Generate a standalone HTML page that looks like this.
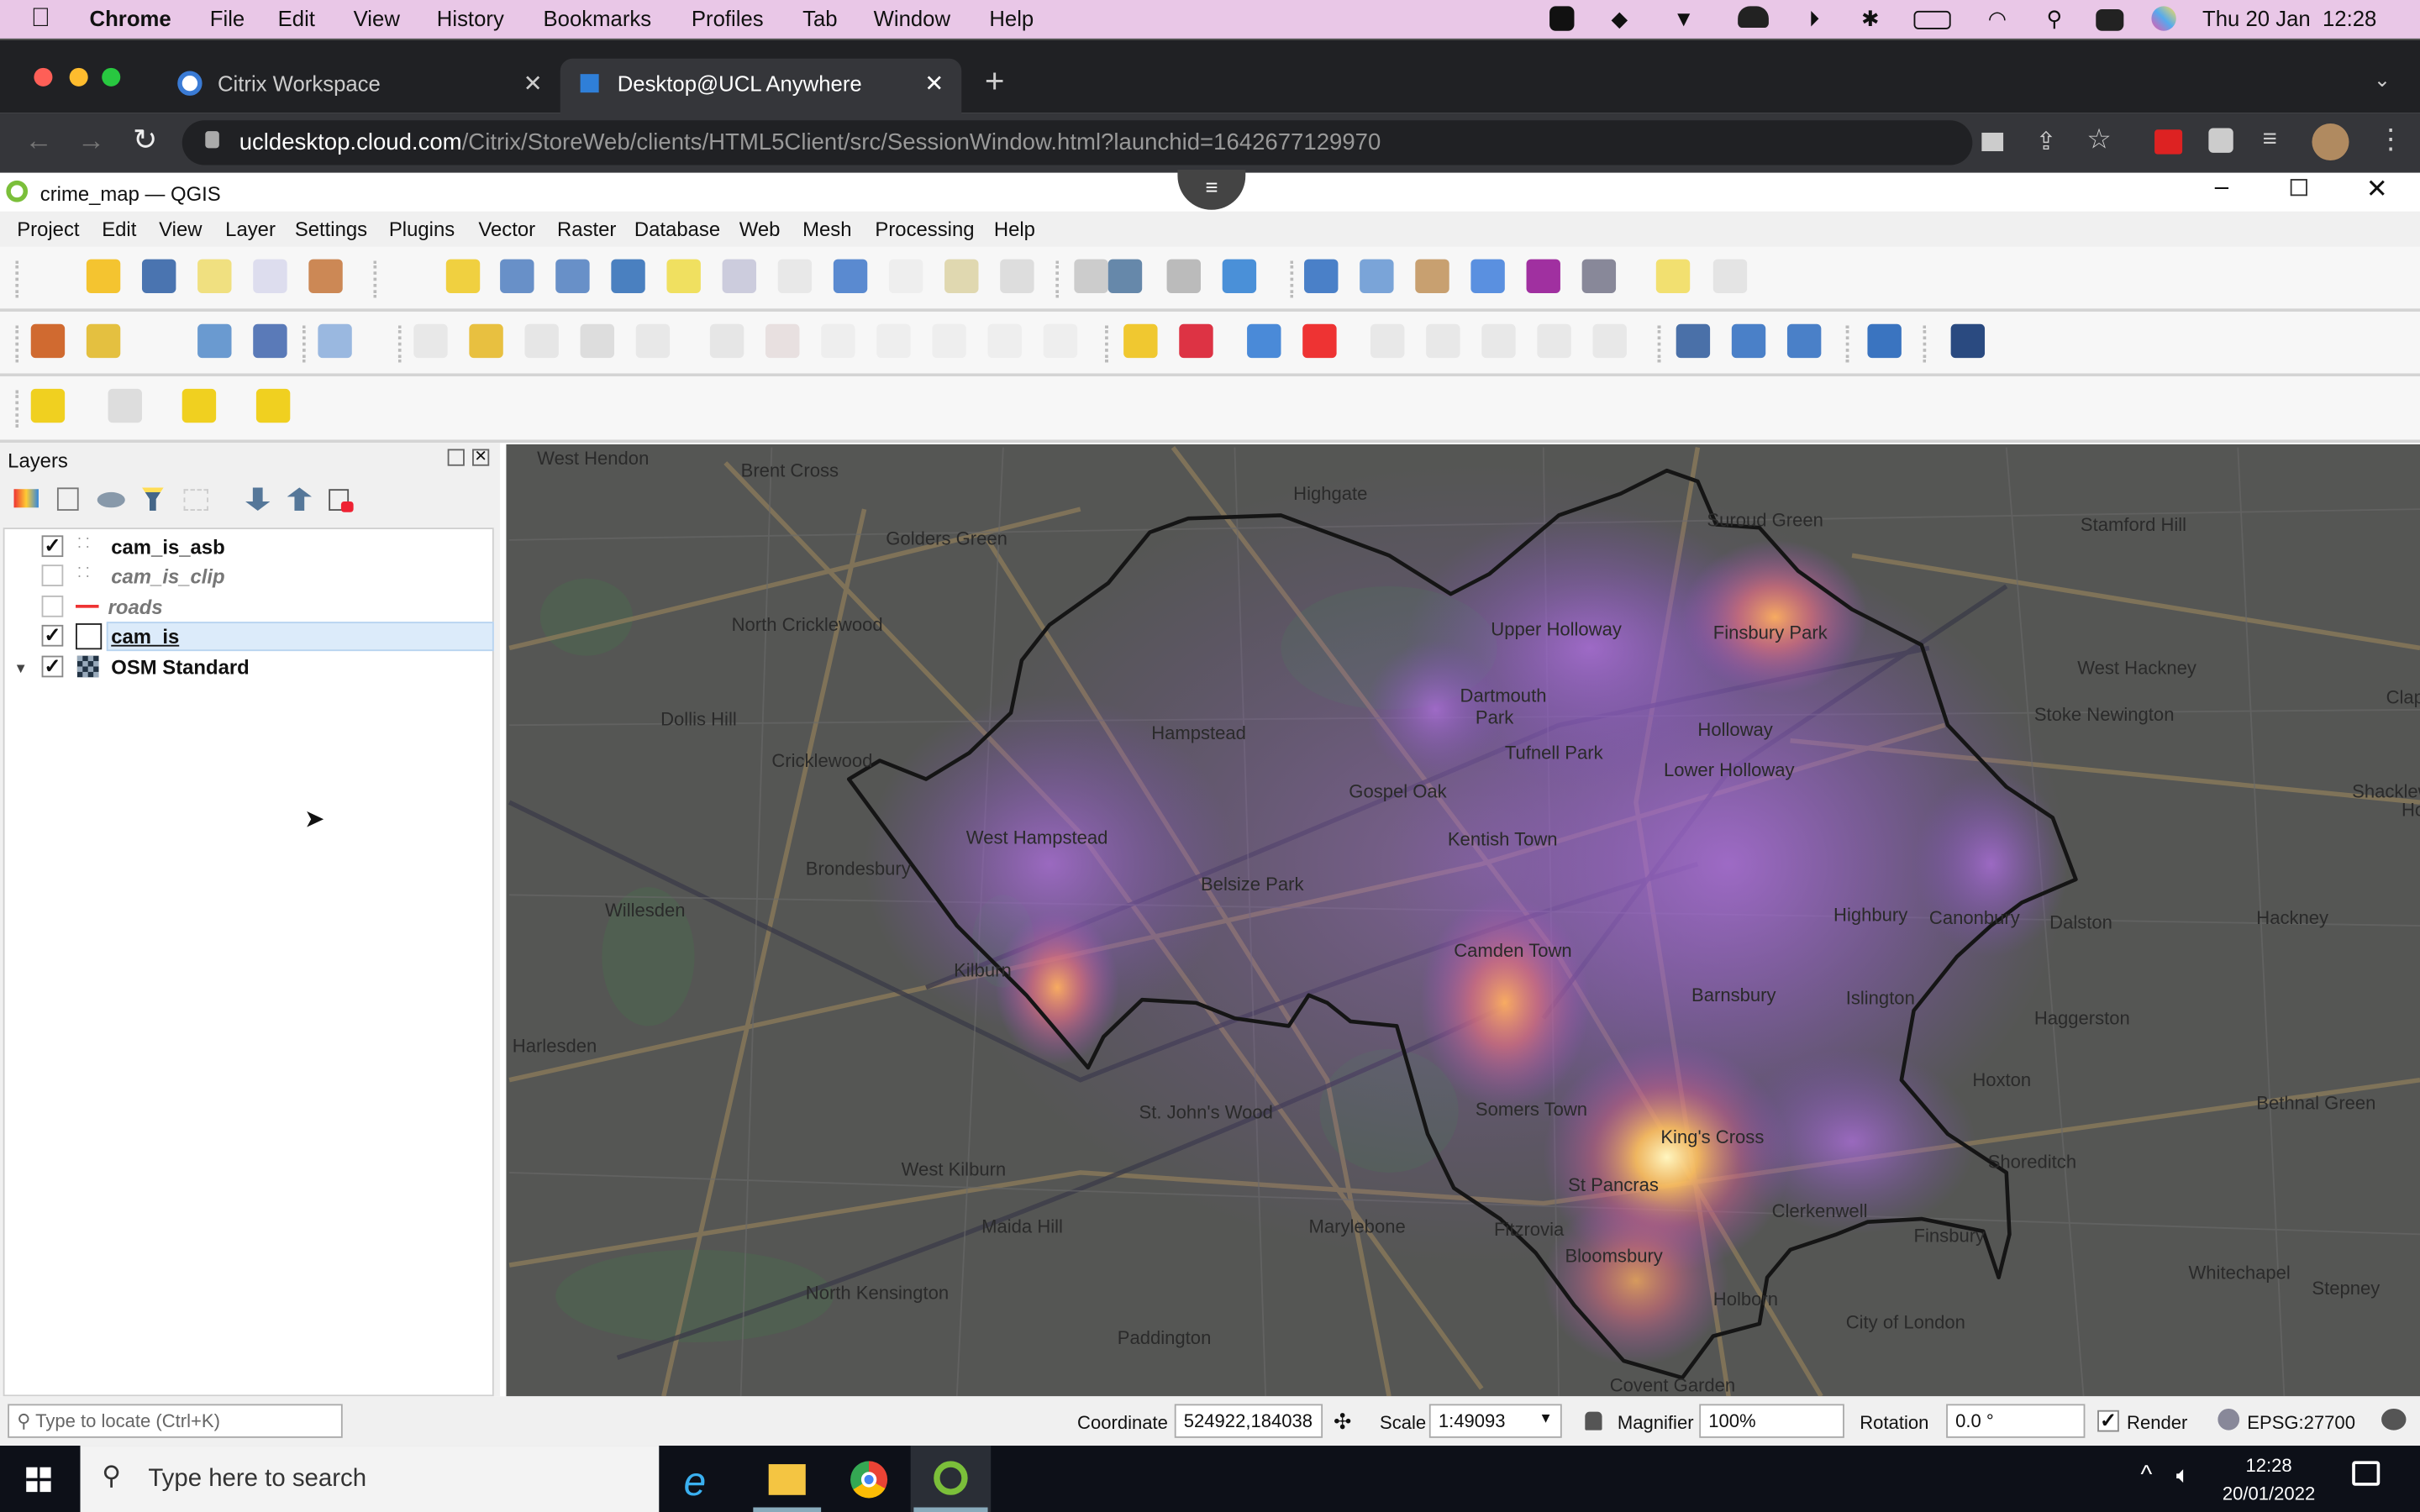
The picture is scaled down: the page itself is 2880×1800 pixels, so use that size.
<!DOCTYPE html>
<html><head><meta charset="utf-8">
<style>
*{margin:0;padding:0;box-sizing:border-box}
html,body{width:2880px;height:1800px;overflow:hidden;background:#fff}
#w{position:absolute;left:0;top:0;width:1568px;height:980px;transform:scale(1.836735);transform-origin:0 0;font-family:"Liberation Sans",sans-serif;font-size:13px;color:#111}
.a{position:absolute}
.mac{left:0;top:0;width:1568px;height:25px;background:#e9c7e7;font-size:14px}
.mac span{position:absolute;top:4px}
.tabs{left:0;top:25px;width:1568px;height:48px;background:#202124;border-top:1px solid #555}
.addr{left:0;top:73px;width:1568px;height:39px;background:#35363a}
.qt{left:0;top:112px;width:1568px;height:25px;background:#fff;font-size:13px}
.menu{left:0;top:137px;width:1568px;height:23px;background:#f0f0f0;font-size:13px}
.menu span{position:absolute;top:4px}
.tb{left:0;width:1568px;background:#f7f7f7;border-bottom:2px solid #d4d4d4}
.ic{position:absolute;width:22px;height:22px;border-radius:3px}
.grip{position:absolute;width:3px;height:24px;border-left:2px dotted #bbb}
.panel{left:0;top:287px;width:324px;height:618px;background:#f0f0f0}
.list{left:2px;top:342px;width:318px;height:563px;background:#fff;border:1px solid #cfcfcf}
.cb{position:absolute;width:14px;height:14px;border:1px solid #888;background:#fff;font-size:13px;line-height:12px;text-align:center;font-weight:bold}
.lt{position:absolute;font-size:13px}
.map{left:328px;top:288px;width:1240px;height:617px;background:#555654;overflow:hidden}
.lbl{position:absolute;font-size:12px;color:#2a2a2a;white-space:nowrap}
.status{left:0;top:905px;width:1568px;height:32px;background:#f0f0f0;font-size:12px}
.box{position:absolute;background:#fff;border:1px solid #aaa;height:22px;top:5px;font-size:12px;padding:3px 5px}
.task{left:0;top:937px;width:1568px;height:43px;background:#0d1018}
</style></head><body><div id="w">

<div class="a mac">
<span style="left:20px;top:2px;font-size:17px">&#63743;</span>
<span style="left:58px;font-weight:bold">Chrome</span><span style="left:136px">File</span><span style="left:180px">Edit</span><span style="left:229px">View</span><span style="left:283px">History</span><span style="left:352px">Bookmarks</span><span style="left:448px">Profiles</span><span style="left:520px">Tab</span><span style="left:566px">Window</span><span style="left:641px">Help</span>
<span style="left:1004px;width:16px;height:16px;background:#111;border-radius:4px"></span>
<span style="left:1044px">◆</span><span style="left:1084px">▼</span><span style="left:1126px;width:20px;height:14px;background:#222;border-radius:8px 8px 3px 3px"></span>
<span style="left:1172px">⏵</span><span style="left:1206px">✱</span>
<span style="left:1240px;width:24px;height:12px;border:1.5px solid #111;border-radius:3px;top:7px"></span>
<span style="left:1288px">◠</span><span style="left:1326px">⚲</span><span style="left:1358px;width:18px;height:14px;background:#222;border-radius:4px;top:6px"></span>
<span style="left:1394px;width:16px;height:16px;border-radius:50%;background:linear-gradient(45deg,#e5a,#5ae,#fd5)"></span>
<span style="left:1427px">Thu 20 Jan&nbsp; 12:28</span>
</div>

<div class="a tabs">
<div class="a" style="left:22px;top:18px;width:12px;height:12px;border-radius:50%;background:#fe5f57"></div>
<div class="a" style="left:45px;top:18px;width:12px;height:12px;border-radius:50%;background:#febc2e"></div>
<div class="a" style="left:66px;top:18px;width:12px;height:12px;border-radius:50%;background:#28c840"></div>
<div class="a" style="left:115px;top:20px;width:16px;height:16px;border-radius:50%;background:#fff;border:3px solid #3a7bd5"></div>
<div class="a" style="left:141px;top:20px;color:#ccc;font-size:14px">Citrix Workspace</div>
<div class="a" style="left:339px;top:19px;color:#ccc;font-size:15px">✕</div>
<div class="a" style="left:363px;top:12px;width:260px;height:36px;background:#35363a;border-radius:8px 8px 0 0"></div>
<div class="a" style="left:376px;top:22px;width:12px;height:12px;background:#2f7fd8"></div>
<div class="a" style="left:400px;top:20px;color:#fff;font-size:14px">Desktop@UCL Anywhere</div>
<div class="a" style="left:599px;top:19px;color:#fff;font-size:15px">✕</div>
<div class="a" style="left:638px;top:14px;color:#ccc;font-size:22px">+</div>
<div class="a" style="left:1538px;top:18px;color:#ccc;font-size:13px">⌄</div>
</div>

<div class="a addr">
<div class="a" style="left:16px;top:8px;color:#777;font-size:18px">←</div>
<div class="a" style="left:50px;top:8px;color:#777;font-size:18px">→</div>
<div class="a" style="left:86px;top:7px;color:#eee;font-size:19px">↻</div>
<div class="a" style="left:118px;top:5px;width:1160px;height:29px;background:#202124;border-radius:15px"></div>
<div class="a" style="left:133px;top:12px;width:9px;height:11px;background:#aaa;border-radius:2px"></div>
<div class="a" style="left:155px;top:11px;font-size:15px;color:#fff">ucldesktop.cloud.com<span style="color:#999">/Citrix/StoreWeb/clients/HTML5Client/src/SessionWindow.html?launchid=1642677129970</span></div>
<div class="a" style="left:1284px;top:13px;width:14px;height:12px;background:#ccc"></div>
<div class="a" style="left:1319px;top:9px;color:#ccc;font-size:16px">⇪</div>
<div class="a" style="left:1352px;top:7px;color:#ccc;font-size:18px">☆</div>
<div class="a" style="left:1396px;top:11px;width:18px;height:16px;background:#d22;border-radius:2px"></div>
<div class="a" style="left:1431px;top:10px;width:16px;height:16px;background:#ccc;border-radius:3px"></div>
<div class="a" style="left:1466px;top:9px;color:#ccc;font-size:16px">≡</div>
<div class="a" style="left:1498px;top:7px;width:24px;height:24px;border-radius:50%;background:#b08a60"></div>
<div class="a" style="left:1540px;top:7px;color:#ccc;font-size:18px">⋮</div>
</div>

<div class="a qt">
<div class="a" style="left:4px;top:5px;width:14px;height:14px;border-radius:50%;border:3px solid #7bbf3a"></div>
<div class="a" style="left:26px;top:6px">crime_map — QGIS</div>
<div class="a" style="left:763px;top:-2px;width:44px;height:26px;background:#444;border-radius:0 0 22px 22px;color:#fff;text-align:center;font-size:14px;line-height:22px">≡</div>
<div class="a" style="left:1435px;top:1px;font-size:16px">–</div>
<div class="a" style="left:1484px;top:4px;width:11px;height:11px;border:1px solid #333"></div>
<div class="a" style="left:1533px;top:1px;font-size:17px">✕</div>
</div>

<div class="a menu">
<span style="left:11px">Project</span><span style="left:66px">Edit</span><span style="left:103px">View</span><span style="left:146px">Layer</span><span style="left:191px">Settings</span><span style="left:252px">Plugins</span><span style="left:310px">Vector</span><span style="left:361px">Raster</span><span style="left:411px">Database</span><span style="left:479px">Web</span><span style="left:520px">Mesh</span><span style="left:567px">Processing</span><span style="left:644px">Help</span>
</div>

<div class="a tb" style="top:160px;height:42px" id="r1"></div>
<div class="a tb" style="top:202px;height:42px" id="r2"></div>
<div class="a tb" style="top:244px;height:43px" id="r3"></div>

<div class="a panel">
<div class="a" style="left:5px;top:4px">Layers</div>
<div class="a" style="left:290px;top:4px;width:11px;height:11px;border:1px solid #666"></div>
<div class="a" style="left:306px;top:4px;width:11px;height:11px;border:1px solid #666;font-size:10px;line-height:9px;text-align:center">✕</div>
<div class="a" style="left:9px;top:30px;width:16px;height:12px;background:linear-gradient(90deg,#e33,#fc3,#38d)"></div>
<div class="a" style="left:37px;top:29px;width:14px;height:15px;border:1px solid #777"></div>
<div class="a" style="left:63px;top:32px;width:18px;height:10px;border-radius:50%;background:#89a;"></div>
<div class="a" style="left:92px;top:29px;width:14px;height:15px;background:linear-gradient(#fd5 20%,#468 20%);clip-path:polygon(0 0,100% 0,65% 50%,65% 100%,35% 100%,35% 50%)"></div>
<div class="a" style="left:119px;top:30px;width:16px;height:14px;border:1px dashed #ccc"></div>
<div class="a" style="left:159px;top:29px;width:16px;height:15px;background:#579;clip-path:polygon(30% 0,70% 0,70% 60%,100% 60%,50% 100%,0 60%,30% 60%)"></div>
<div class="a" style="left:186px;top:29px;width:16px;height:15px;background:#579;clip-path:polygon(50% 0,100% 40%,70% 40%,70% 100%,30% 100%,30% 40%,0 40%)"></div>
<div class="a" style="left:213px;top:30px;width:13px;height:14px;border:1px solid #555"></div>
<div class="a" style="left:221px;top:38px;width:8px;height:7px;background:#e23;border-radius:2px"></div>
</div>
<div class="a list">
<div class="cb" style="left:24px;top:4px">✓</div><div class="a" style="left:47px;top:4px;color:#999;font-size:9px">⁚ ⁚</div><div class="lt" style="left:69px;top:4px;font-weight:bold">cam_is_asb</div>
<div class="cb" style="left:24px;top:23px;border-color:#bbb"></div><div class="a" style="left:47px;top:23px;color:#999;font-size:9px">⁚ ⁚</div><div class="lt" style="left:69px;top:23px;font-style:italic;font-weight:bold;color:#777">cam_is_clip</div>
<div class="cb" style="left:24px;top:43px;border-color:#bbb"></div><div class="a" style="left:46px;top:49px;width:15px;height:2px;background:#e33"></div><div class="lt" style="left:67px;top:43px;font-style:italic;font-weight:bold;color:#777">roads</div>
<div class="a" style="left:66px;top:60px;width:251px;height:19px;background:#dcebfa;border:1px solid #b8d4f0"></div>
<div class="cb" style="left:24px;top:62px">✓</div><div class="a" style="left:46px;top:61px;width:17px;height:17px;border:1.5px solid #222"></div><div class="lt" style="left:69px;top:62px;font-weight:bold;text-decoration:underline">cam_is</div>
<div class="a" style="left:6px;top:85px;font-size:9px;color:#444">▼</div>
<div class="cb" style="left:24px;top:82px">✓</div><div class="a" style="left:47px;top:82px;width:14px;height:14px;background:repeating-conic-gradient(#234 0 25%,#9ab 0 50%) 0 0/7px 7px"></div><div class="lt" style="left:69px;top:82px;font-weight:bold">OSM Standard</div>
<div class="a" style="left:194px;top:178px;font-size:16px">➤</div>
</div>

<div class="a map">
<svg width="1240" height="617" viewBox="328 288 1240 617" style="position:absolute;left:0;top:0">
<defs>
<radialGradient id="p"><stop offset="0" stop-color="#b070e0" stop-opacity=".75"/><stop offset="1" stop-color="#8050c0" stop-opacity="0"/></radialGradient>
<radialGradient id="o"><stop offset="0" stop-color="#ffb060" stop-opacity=".95"/><stop offset=".4" stop-color="#e07080" stop-opacity=".7"/><stop offset="1" stop-color="#a050d0" stop-opacity="0"/></radialGradient>
<radialGradient id="y"><stop offset="0" stop-color="#fff6c0"/><stop offset=".25" stop-color="#ffc060" stop-opacity=".9"/><stop offset=".6" stop-color="#d06090" stop-opacity=".5"/><stop offset="1" stop-color="#a050d0" stop-opacity="0"/></radialGradient>
</defs>
<g fill="#4e6450" opacity=".7">
<ellipse cx="420" cy="620" rx="30" ry="45"/><ellipse cx="900" cy="420" rx="70" ry="40"/><ellipse cx="900" cy="720" rx="45" ry="40"/><ellipse cx="450" cy="840" rx="90" ry="30"/><ellipse cx="650" cy="610" rx="20" ry="30"/><ellipse cx="380" cy="400" rx="30" ry="25"/>
</g>
<g stroke="#8a7a5a" stroke-width="3" fill="none" opacity=".8">
<path d="M330 420 Q500 380 700 330"/><path d="M470 300 L700 540 L960 900"/><path d="M640 350 L860 700 L900 905"/><path d="M330 700 Q600 640 960 560 L1260 470"/><path d="M760 290 L1010 620 L1180 905"/><path d="M1100 290 L1060 520 L1120 905"/><path d="M330 820 L700 760 L1000 780 L1568 700"/><path d="M1200 360 L1568 420"/><path d="M1160 480 L1568 520"/><path d="M560 330 L430 905"/>
</g>
<g stroke="#3c3c48" stroke-width="3" fill="none" opacity=".8">
<path d="M330 520 L700 700 Q900 620 1100 560"/><path d="M600 640 Q800 560 1010 470 L1250 420"/><path d="M400 880 Q700 780 980 650"/><path d="M1000 660 L1120 500 L1300 380"/>
</g>
<g stroke="#6a6a6a" stroke-width="1" fill="none" opacity=".6">
<path d="M330 350 L1568 330"/><path d="M330 470 L1568 460"/><path d="M330 580 L1568 600"/><path d="M330 760 L1568 800"/><path d="M500 290 L480 905"/><path d="M800 290 L820 905"/><path d="M1300 290 L1350 905"/><path d="M1450 290 L1480 905"/><path d="M650 290 L620 905"/><path d="M1000 290 L1010 905"/>
</g>
<ellipse cx="960" cy="560" rx="360" ry="260" fill="url(#p)" opacity=".6"/>
<ellipse cx="1120" cy="560" rx="220" ry="200" fill="url(#p)"/>
<ellipse cx="680" cy="560" rx="120" ry="110" fill="url(#p)"/>
<ellipse cx="1030" cy="420" rx="120" ry="90" fill="url(#p)"/>
<ellipse cx="1150" cy="400" rx="60" ry="50" fill="url(#o)"/>
<ellipse cx="930" cy="460" rx="45" ry="45" fill="url(#p)"/>
<ellipse cx="685" cy="640" rx="40" ry="50" fill="url(#o)"/>
<ellipse cx="975" cy="650" rx="55" ry="70" fill="url(#o)"/>
<ellipse cx="1080" cy="750" rx="80" ry="75" fill="url(#y)"/>
<ellipse cx="1060" cy="830" rx="60" ry="55" fill="url(#o)" opacity=".8"/>
<ellipse cx="1200" cy="740" rx="80" ry="60" fill="url(#p)"/>
<ellipse cx="1290" cy="560" rx="50" ry="60" fill="url(#p)"/>
<path fill="none" stroke="#151515" stroke-width="2.5" stroke-linejoin="round" d="M550 505 L570 493 L600 505 L628 488 L655 462 L662 428 L680 405 L718 378 L745 345 L770 336 L830 334 L900 360 L940 385 L965 372 L1010 334 L1050 320 L1080 305 L1100 312 L1112 340 L1140 342 L1165 370 L1200 395 L1245 418 L1262 470 L1300 510 L1330 530 L1345 570 L1310 585 L1290 600 L1268 620 L1240 655 L1232 700 L1262 735 L1300 760 L1302 800 L1295 828 L1285 798 L1245 790 L1210 792 L1190 800 L1160 810 L1145 828 L1140 858 L1110 866 L1090 893 L1052 882 L1020 846 L995 812 L972 790 L942 770 L925 735 L905 665 L875 662 L860 650 L848 645 L835 665 L800 660 L775 650 L740 648 L715 672 L705 692 L665 645 L620 600 Z"/>
</svg>
<div class="lbl" style="left:20px;top:2px">West Hendon</div>
<div class="lbl" style="left:152px;top:10px">Brent Cross</div>
<div class="lbl" style="left:510px;top:25px">Highgate</div>
<div class="lbl" style="left:246px;top:54px">Golders Green</div>
<div class="lbl" style="left:778px;top:42px">Suroud Green</div>
<div class="lbl" style="left:1020px;top:45px">Stamford Hill</div>
<div class="lbl" style="left:146px;top:110px">North Cricklewood</div>
<div class="lbl" style="left:638px;top:113px">Upper Holloway</div>
<div class="lbl" style="left:782px;top:115px">Finsbury Park</div>
<div class="lbl" style="left:1018px;top:138px">West Hackney</div>
<div class="lbl" style="left:618px;top:156px">Dartmouth<br>&nbsp;&nbsp;&nbsp;Park</div>
<div class="lbl" style="left:418px;top:180px">Hampstead</div>
<div class="lbl" style="left:772px;top:178px">Holloway</div>
<div class="lbl" style="left:990px;top:168px">Stoke Newington</div>
<div class="lbl" style="left:100px;top:171px">Dollis Hill</div>
<div class="lbl" style="left:1218px;top:157px">Clapton</div>
<div class="lbl" style="left:647px;top:193px">Tufnell Park</div>
<div class="lbl" style="left:750px;top:204px">Lower Holloway</div>
<div class="lbl" style="left:172px;top:198px">Cricklewood</div>
<div class="lbl" style="left:546px;top:218px">Gospel Oak</div>
<div class="lbl" style="left:1196px;top:218px">Shacklewell</div>
<div class="lbl" style="left:298px;top:248px">West Hampstead</div>
<div class="lbl" style="left:610px;top:249px">Kentish Town</div>
<div class="lbl" style="left:1228px;top:230px">Homer</div>
<div class="lbl" style="left:194px;top:268px">Brondesbury</div>
<div class="lbl" style="left:450px;top:278px">Belsize Park</div>
<div class="lbl" style="left:860px;top:298px">Highbury</div>
<div class="lbl" style="left:64px;top:295px">Willesden</div>
<div class="lbl" style="left:922px;top:300px">Canonbury</div>
<div class="lbl" style="left:1000px;top:303px">Dalston</div>
<div class="lbl" style="left:1134px;top:300px">Hackney</div>
<div class="lbl" style="left:290px;top:334px">Kilburn</div>
<div class="lbl" style="left:614px;top:321px">Camden Town</div>
<div class="lbl" style="left:768px;top:350px">Barnsbury</div>
<div class="lbl" style="left:868px;top:352px">Islington</div>
<div class="lbl" style="left:990px;top:365px">Haggerston</div>
<div class="lbl" style="left:4px;top:383px">Harlesden</div>
<div class="lbl" style="left:950px;top:405px">Hoxton</div>
<div class="lbl" style="left:1134px;top:420px">Bethnal Green</div>
<div class="lbl" style="left:410px;top:426px">St. John's Wood</div>
<div class="lbl" style="left:628px;top:424px">Somers Town</div>
<div class="lbl" style="left:748px;top:442px">King's Cross</div>
<div class="lbl" style="left:960px;top:458px">Shoreditch</div>
<div class="lbl" style="left:256px;top:463px">West Kilburn</div>
<div class="lbl" style="left:688px;top:473px">St Pancras</div>
<div class="lbl" style="left:820px;top:490px">Clerkenwell</div>
<div class="lbl" style="left:308px;top:500px">Maida Hill</div>
<div class="lbl" style="left:520px;top:500px">Marylebone</div>
<div class="lbl" style="left:640px;top:502px">Fitzrovia</div>
<div class="lbl" style="left:912px;top:506px">Finsbury</div>
<div class="lbl" style="left:686px;top:519px">Bloomsbury</div>
<div class="lbl" style="left:782px;top:547px">Holborn</div>
<div class="lbl" style="left:1090px;top:530px">Whitechapel</div>
<div class="lbl" style="left:194px;top:543px">North Kensington</div>
<div class="lbl" style="left:868px;top:562px">City of London</div>
<div class="lbl" style="left:1170px;top:540px">Stepney</div>
<div class="lbl" style="left:396px;top:572px">Paddington</div>
<div class="lbl" style="left:715px;top:603px">Covent Garden</div>
</div>

<div class="a status">
<div class="box" style="left:5px;width:217px;color:#666">⚲ Type to locate (Ctrl+K)</div>
<div class="a" style="left:698px;top:10px">Coordinate</div>
<div class="box" style="left:761px;width:96px">524922,184038</div>
<div class="a" style="left:864px;top:8px;font-size:14px">✣</div>
<div class="a" style="left:894px;top:10px">Scale</div>
<div class="box" style="left:926px;width:86px">1:49093 <span style="float:right;font-size:9px">▼</span></div>
<div class="a" style="left:1027px;top:10px;width:11px;height:12px;background:#555;border-radius:3px 3px 1px 1px"></div>
<div class="a" style="left:1048px;top:10px">Magnifier</div>
<div class="box" style="left:1101px;width:94px">100%</div>
<div class="a" style="left:1205px;top:10px">Rotation</div>
<div class="box" style="left:1261px;width:90px">0.0 °</div>
<div class="cb" style="left:1359px;top:9px">✓</div>
<div class="a" style="left:1378px;top:10px">Render</div>
<div class="a" style="left:1437px;top:8px;width:14px;height:14px;border-radius:50%;background:#889"></div>
<div class="a" style="left:1456px;top:10px">EPSG:27700</div>
<div class="a" style="left:1543px;top:8px;width:16px;height:14px;background:#555;border-radius:50%"></div>
</div>

<div class="a task">
<div class="a" style="left:17px;top:14px;width:16px;height:16px;background:linear-gradient(90deg,#fff 45%,transparent 45% 55%,#fff 55%);"></div>
<div class="a" style="left:17px;top:21px;width:16px;height:2px;background:#0d1018"></div>
<div class="a" style="left:52px;top:0;width:375px;height:43px;background:#f3f3f3"></div>
<div class="a" style="left:66px;top:10px;font-size:17px;color:#333">⚲</div>
<div class="a" style="left:96px;top:13px;font-size:16px;color:#333">Type here to search</div>
<div class="a" style="left:443px;top:8px;font-size:26px;color:#3ab0f0;font-style:italic">e</div>
<div class="a" style="left:498px;top:12px;width:24px;height:20px;background:#f4c542"></div>
<div class="a" style="left:551px;top:10px;width:24px;height:24px;border-radius:50%;background:conic-gradient(#ea4335 0 33%,#fbbc05 0 66%,#34a853 0)"></div>
<div class="a" style="left:558px;top:17px;width:10px;height:10px;border-radius:50%;background:#4285f4;border:2px solid #fff"></div>
<div class="a" style="left:590px;top:0;width:52px;height:43px;background:#2a2e36"></div>
<div class="a" style="left:605px;top:10px;width:22px;height:22px;border-radius:50%;border:4px solid #7bbf3a"></div>
<div class="a" style="left:488px;top:40px;width:44px;height:3px;background:#8ab"></div>
<div class="a" style="left:592px;top:40px;width:48px;height:3px;background:#8ab"></div>
<div class="a" style="left:1387px;top:11px;color:#fff;font-size:16px">^</div>
<div class="a" style="left:1410px;top:11px;color:#fff;font-size:15px">🔈︎</div>
<div class="a" style="left:1440px;top:4px;color:#fff;font-size:12px;text-align:center;line-height:18px">12:28<br>20/01/2022</div>
<div class="a" style="left:1524px;top:10px;width:18px;height:16px;border:2px solid #fff;border-radius:2px"></div>
</div>

<script>
function row(id,items){var r=document.getElementById(id);items.forEach(function(it){var d=document.createElement('div');if(it[1]=='g'){d.className='grip';d.style.left=it[0]+'px';d.style.top='9px';}else{d.className='ic';d.style.left=it[0]+'px';d.style.top='8px';d.style.background=it[1];if(it[2])d.style.opacity=it[2];}r.appendChild(d);});}
row('r1',[[10,'g'],[22,'#fafafa;border:1px solid #999'],[56,'#f4c430'],[92,'#4a74b0'],[128,'#f0e080'],[164,'#dde'],[200,'#c85'],[242,'g'],[250,'#ddd;border:1px solid #aaa'],[289,'#f0d040'],[324,'#6890c8'],[360,'#6890c8'],[396,'#4a80c0'],[432,'#f0e060'],[468,'#ccd'],[504,'#e8e8e8'],[540,'#5a8ad0'],[576,'#eee'],[612,'#e0d8b0'],[648,'#ddd'],[684,'g'],[696,'#ccc'],[718,'#68a'],[756,'#bbb'],[792,'#4a90d8'],[836,'g'],[845,'#4a80c8'],[881,'#7aa4d8'],[917,'#c8a070'],[953,'#5a90e0'],[989,'#a030a0'],[1025,'#889'],[1073,'#f2e070'],[1110,'#e4e4e4'],[1158,'#e8f0e8;border:1px solid #888']]);
row('r2',[[10,'g'],[20,'#d06a30'],[56,'#e4c040'],[92,'#eee;border:1px solid #777'],[128,'#6a9ad0'],[164,'#5a7ab8'],[196,'g'],[206,'#9ab8e0'],[258,'g'],[268,'#e8e8e8'],[304,'#e8c040'],[340,'#e6e6e6'],[376,'#ddd'],[412,'#e8e8e8'],[460,'#e6e6e6'],[496,'#e8e0e0'],[532,'#eee'],[568,'#eee'],[604,'#eee'],[640,'#eee'],[676,'#eee'],[716,'g'],[728,'#f0c830'],[764,'#d34'],[808,'#4a8ad8'],[844,'#e33'],[888,'#e8e8e8'],[924,'#e8e8e8'],[960,'#e8e8e8'],[996,'#e8e8e8'],[1032,'#e8e8e8'],[1074,'g'],[1086,'#4a70a8'],[1122,'#4a80c8'],[1158,'#4a80c8'],[1196,'g'],[1210,'#3a74c0'],[1246,'g'],[1264,'#2a4a80']]);
row('r3',[[10,'g'],[20,'#f0d020'],[70,'#ddd'],[118,'#f0d020'],[166,'#f0d020']]);
</script>
</div></body></html>
